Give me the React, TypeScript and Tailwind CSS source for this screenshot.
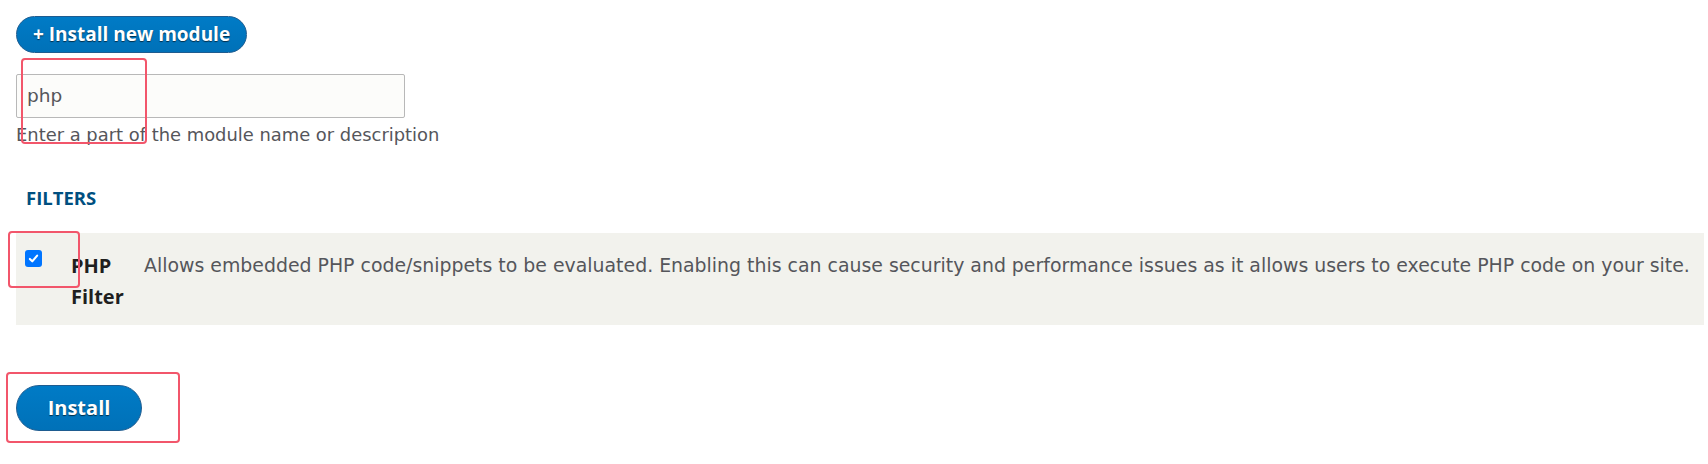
import React from 'react';

const desc =
  'Allows embedded PHP code/snippets to be evaluated. Enabling this can cause security and performance issues as it allows users to execute PHP code on your site.';

function BlueButton({ children, className }: { children: React.ReactNode; className: string }) {
  return (
    <button
      className={
        "rounded-full border border-[#1e5c90] bg-gradient-to-b from-[#007bc6] to-[#0071b8] font-['Open_Sans',sans-serif] font-bold text-white [text-shadow:0_1px_1px_rgba(0,0,0,0.6)] " +
        className
      }
    >
      {children}
    </button>
  );
}

export default function App() {
  return (
    <div className="relative h-[464px] w-[1708px] bg-white font-['DejaVu_Sans',sans-serif] text-[#55565b]">
      <div className="flex flex-col items-start pl-4 pt-4">
        <BlueButton className="h-[37px] px-[16px] text-[19px] leading-none">+ Install new module</BlueButton>

        <div className="mt-[21px] flex h-[44px] w-[389px] items-center rounded-[2px] border border-[#b8b8b8] bg-[#fcfcfa] pl-[10px] text-[18.5px]">
          php
        </div>
        <p className="mt-[5px] text-[17.9px] leading-[24px]">Enter a part of the module name or description</p>

        <h2 className="mt-[39px] pl-[10px] font-['Open_Sans',sans-serif] text-[18.5px] font-bold leading-[24px] text-[#004f80]">FILTERS</h2>

        <div className="mt-[23px] flex h-[92px] w-[1688px] items-start bg-[#f2f2ed] pt-[17px]">
          <div className="ml-[9px] flex h-[17px] w-[17px] items-center justify-center rounded-[3px] bg-[#0075ff]">
            <svg viewBox="0 0 16 16" className="h-[13px] w-[13px]" fill="none" stroke="white" strokeWidth="2.6" strokeLinecap="round" strokeLinejoin="round">
              <path d="M3.5 8.5l3 3 6-7" />
            </svg>
          </div>
          <div className="ml-[29px] w-[60px] font-['Open_Sans',sans-serif] text-[20px] font-bold leading-[31px] text-[#1f1f1f]">PHP Filter</div>
          <div className="ml-[13px] mt-[1px] text-[18.9px] leading-[28px]">{desc}</div>
        </div>

        <BlueButton className="mt-[60px] h-[46px] w-[126px] text-[20px] leading-none">Install</BlueButton>
      </div>

      <div className="absolute left-[21px] top-[58px] h-[86px] w-[126px] rounded-[4px] border-2 border-[#f2566b]" />
      <div className="absolute left-[8px] top-[231px] h-[57px] w-[72px] rounded-[4px] border-2 border-[#f2566b]" />
      <div className="absolute left-[6px] top-[372px] h-[71px] w-[174px] rounded-[4px] border-2 border-[#f2566b]" />
    </div>
  );
}
